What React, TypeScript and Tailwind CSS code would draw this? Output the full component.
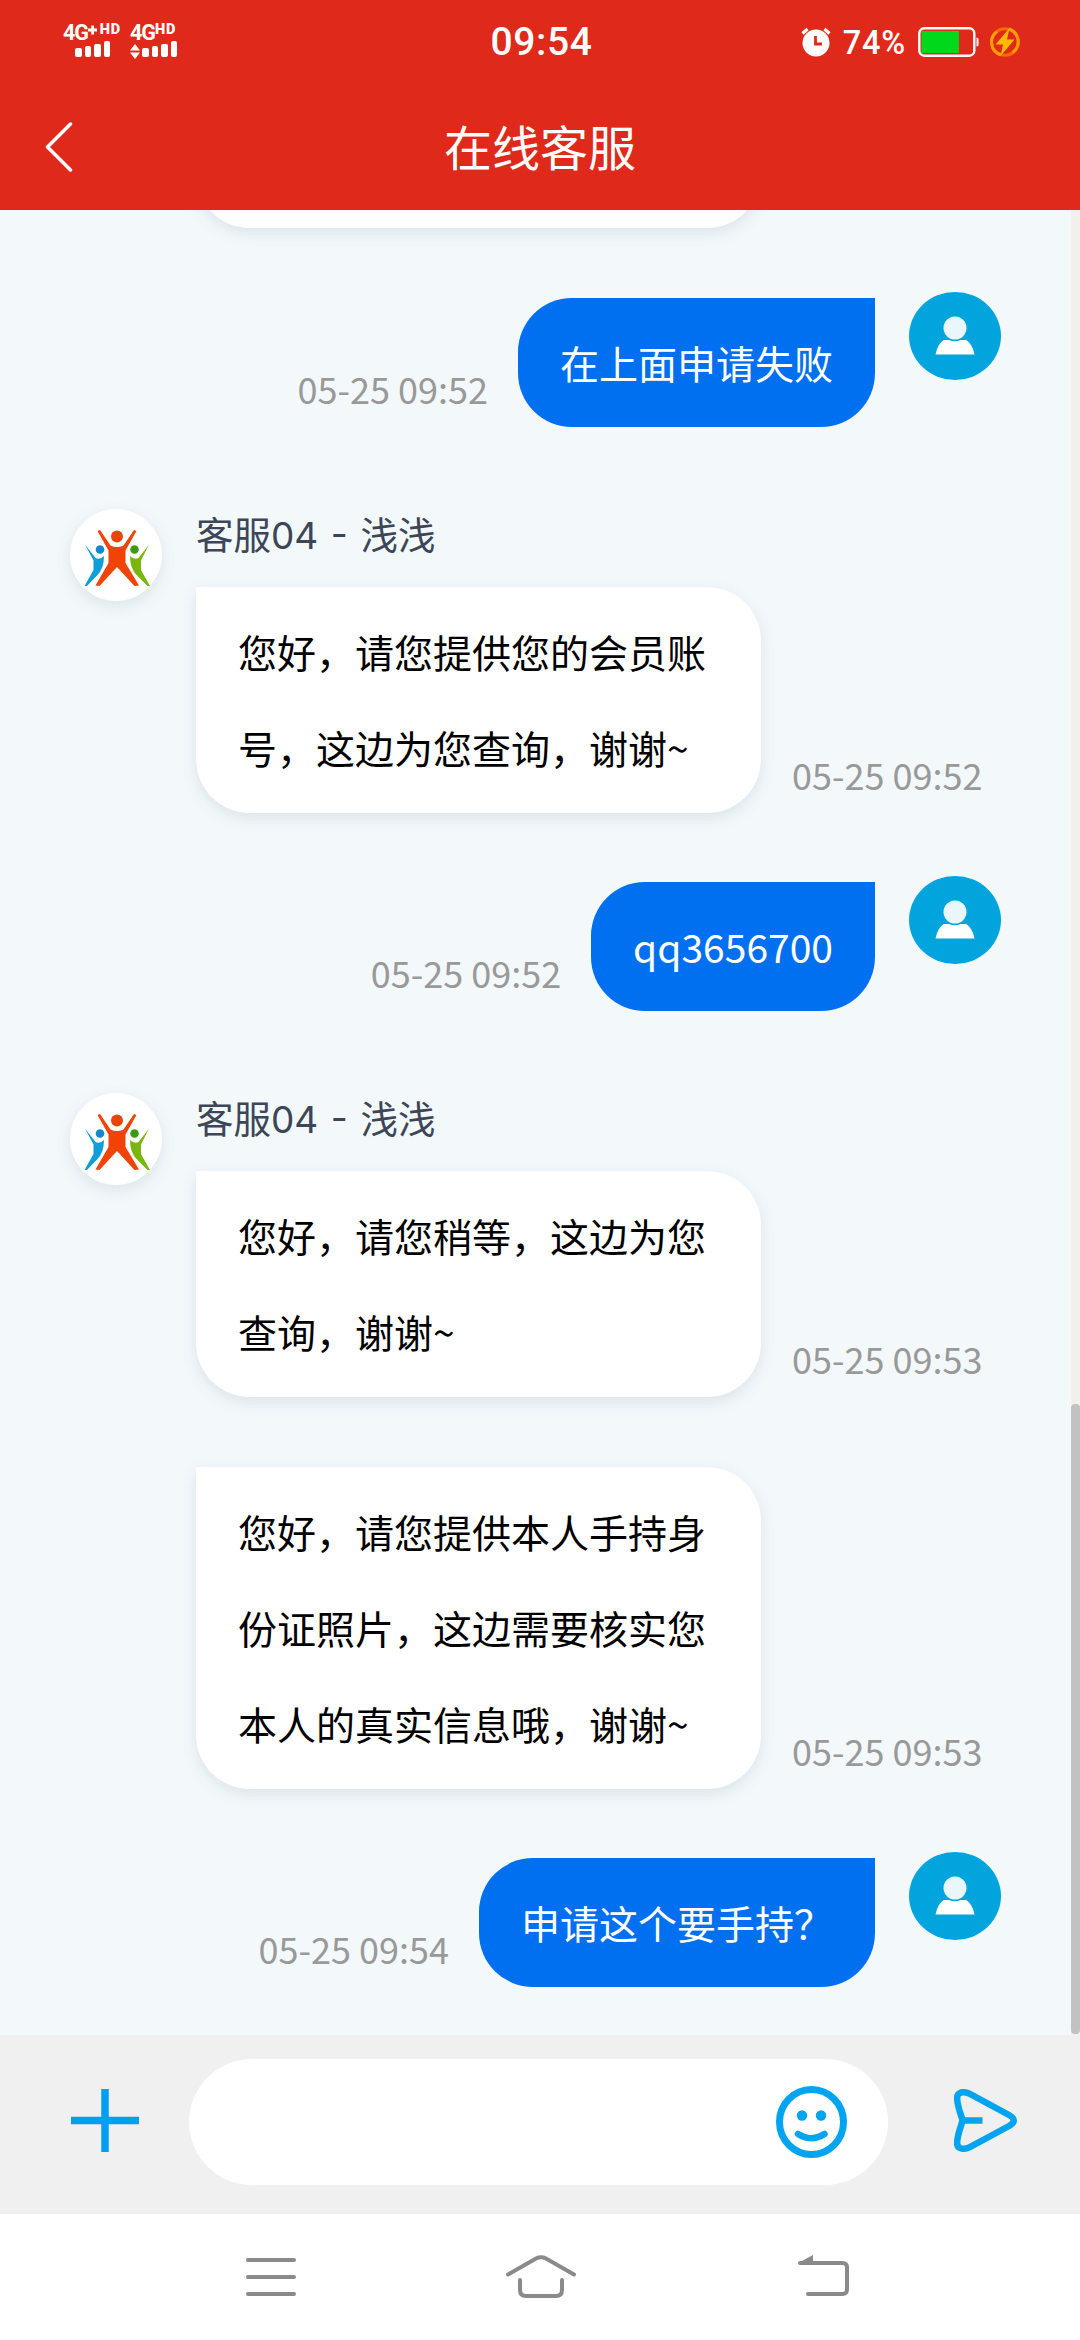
import type { ReactNode } from "react";

type AgentBubble = {
  lines: string[];
  time: string;
};

type Message =
  | { from: "user"; text: string; time: string }
  | { from: "agent"; name: [string, string, string]; bubbles: AgentBubble[] };

const messages: Message[] = [
  { from: "user", text: "在上面申请失败", time: "05-25 09:52" },
  {
    from: "agent",
    name: ["客服", "04 - ", "浅浅"],
    bubbles: [
      {
        lines: ["您好，请您提供您的会员账", "号，这边为您查询，谢谢~"],
        time: "05-25 09:52",
      },
    ],
  },
  { from: "user", text: "qq3656700", time: "05-25 09:52" },
  {
    from: "agent",
    name: ["客服", "04 - ", "浅浅"],
    bubbles: [
      {
        lines: ["您好，请您稍等，这边为您", "查询，谢谢~"],
        time: "05-25 09:53",
      },
      {
        lines: [
          "您好，请您提供本人手持身",
          "份证照片，这边需要核实您",
          "本人的真实信息哦，谢谢~",
        ],
        time: "05-25 09:53",
      },
    ],
  },
  { from: "user", text: "申请这个要手持？", time: "05-25 09:54" },
];

function SignalBars() {
  return (
    <div className="flex items-end gap-[3px]">
      <span className="h-[9px] w-[6.5px] rounded-[2px] bg-white" />
      <span className="h-[11px] w-[6.5px] rounded-[2px] bg-white" />
      <span className="h-[13px] w-[6.5px] rounded-[2px] bg-white" />
      <span className="h-4 w-[6.5px] rounded-[2px] bg-white" />
    </div>
  );
}

function StatusBar() {
  return (
    <div className="flex h-[84px] items-center justify-between pr-[60px] pl-[63px] font-['Roboto'] text-white">
      <div className="-mt-[3px] flex w-[240px] gap-[9px]">
        <div className="flex w-[58px] flex-col">
          <div className="flex h-[16px] items-start font-bold">
            <span className="w-[25px] text-[21.5px] leading-[16px] tracking-[-1.2px]">4G</span>
            <svg className="h-[10px] w-[10px]" viewBox="0 0 10 10" stroke="#fff" strokeWidth="3">
              <path d="M0 5H10M5 0V10" />
            </svg>
            <span className="ml-[3px] text-[14.5px] leading-[10px] font-black tracking-[0.8px]">HD</span>
          </div>
          <div className="ml-3">
            <SignalBars />
          </div>
        </div>
        <div className="flex flex-col">
          <div className="flex h-[16px] items-start font-bold">
            <span className="w-[25px] text-[21.5px] leading-[16px] tracking-[-1.2px]">4G</span>
            <span className="text-[14.5px] leading-[10px] font-black tracking-[0.8px]">HD</span>
          </div>
          <div className="flex items-end gap-[2px]">
            <svg className="-mb-[2px] h-[15px] w-[10px]" viewBox="0 0 10 15" fill="#fff">
              <path d="M5 0 10 6.500H0ZM0 8.500H10L5 15Z" />
            </svg>
            <SignalBars />
          </div>
        </div>
      </div>

      <span className="text-[39px] leading-none font-medium tracking-[0.6px]">09:54</span>

      <div className="flex w-[240px] items-center justify-end">
        <svg className="h-[30px] w-[30px] shrink-0" viewBox="0 0 30 30">
          <path d="M1.500 6.500 6.500 2M28.500 6.500 23.500 2" stroke="#fff" strokeWidth="3.200" />
          <circle cx="15" cy="16" r="13.500" fill="#fff" />
          <path d="M14.500 9V17H21" fill="none" stroke="#df291a" strokeWidth="2.800" />
        </svg>
        <span className="ml-3 pt-[2px] text-[32.500px] leading-none font-medium tracking-[0.8px]">74%</span>
        <svg className="ml-3 h-[30px] w-[61px] shrink-0" viewBox="0 0 61 30">
          <rect x="1.300" y="1.300" width="55" height="27.400" rx="5" fill="none" stroke="#fff" strokeWidth="2.400" />
          <rect x="3.500" y="4" width="37.500" height="22" fill="#00d91b" />
          <path d="M58.500 10.500Q60.500 10.500 60.500 12V18Q60.500 19.500 58.500 19.500Z" fill="#fff" />
        </svg>
        <svg className="ml-[11px] h-[30px] w-[30px] shrink-0" viewBox="0 0 30 30">
          <circle cx="15" cy="15" r="13.300" fill="none" stroke="#fb6a00" strokeWidth="3" />
          <path d="M11 28A13.300 13.300 0 0 1 7 4.500M19 2A13.300 13.300 0 0 1 22.500 25.500" fill="none" stroke="#ff9d00" strokeWidth="3" />
          <path d="M19.500 1 5.500 17.500H13L10.500 29 24.500 12.500H17Z" fill="#ffb900" />
        </svg>
      </div>
    </div>
  );
}

function UserAvatar() {
  return (
    <svg className="ml-[34px] h-[88px] w-[92px] shrink-0" viewBox="0 0 92 88">
      <ellipse cx="46" cy="44" rx="46" ry="44" fill="#02a4dd" />
      <path d="M35 48H57C61.500 50.500 64 56 65.500 62.500H26.500C28 56 30.500 50.500 35 48Z" fill="#fff" />
      <circle cx="46" cy="36" r="13.200" fill="#02a4dd" />
      <circle cx="46" cy="36" r="11.500" fill="#e9f7fd" />
    </svg>
  );
}

function AgentAvatar() {
  return (
    <div className="h-[92px] w-[92px] shrink-0 rounded-full bg-white shadow-[0_5px_16px_rgba(60,90,110,0.12)]">
      <svg viewBox="0 0 92 92">
        <path d="M15 35.500 25.500 49Q30 51 34 47Q34 60 27 66.500L17 77H14.500L23.500 61V51.500Z" fill="#0e9fd8" />
        <circle cx="30" cy="40.500" r="4.300" fill="#1488cf" />
        <path d="M79 35.500 68.500 49Q64 51 60 47Q60 60 67 66.500L77.500 77H80L71 61V51.500Z" fill="#7cb50e" />
        <circle cx="64.500" cy="40.500" r="4.300" fill="#3f9b14" />
        <path d="M27.500 22 30 21 40.500 36.500Q47 39.500 53.500 36.500L64 21 66.500 22 55.500 41.500V54L69 76.500 64.500 77 47 58 29.500 77 25.500 76.500 38.500 54V41.500Z" fill="#f04407" />
        <circle cx="47" cy="27.500" r="6" fill="#f04407" />
      </svg>
    </div>
  );
}

function Time({ children }: { children: ReactNode }) {
  return (
    <span className="mb-[21px] text-[36px] leading-9 whitespace-nowrap text-[#999]">
      {children}
    </span>
  );
}

function UserMessage({ text, time }: { text: string; time: string }) {
  return (
    <div className="flex justify-end pr-[70px]">
      <div className="mt-[6px] flex items-end gap-[30px]">
        <Time>{time}</Time>
        <p className="h-[129px] rounded-[54px] rounded-tr-none bg-[#0070f0] px-[42px] pt-[16px] text-[39px] leading-[96px] whitespace-nowrap text-white">
          {text}
        </p>
      </div>
      <UserAvatar />
    </div>
  );
}

function AgentMessage({
  name,
  bubbles,
}: {
  name: [string, string, string];
  bubbles: AgentBubble[];
}) {
  return (
    <div className="flex gap-[34px] pl-[70px]">
      <AgentAvatar />
      <div className="flex flex-col">
        <h2 className="mb-[29px] h-[49px] text-[37.500px] leading-[48px] whitespace-pre text-[#3c4657]">
          {name[0]}
          <span className="font-['Inter'] text-[37px] [word-spacing:2.2px]">{name[1]}</span>
          {name[2]}
        </h2>
        <div className="flex flex-col gap-[70px]">
          {bubbles.map((bubble, i) => (
            <div key={i} className="flex items-end gap-[31px]">
              <div className="w-[565px] rounded-[54px] rounded-tl-none bg-white pt-[16px] pb-[18px] pl-[42px] text-[39px] leading-[96px] text-black shadow-[0_5px_16px_rgba(60,90,110,0.12)]">
                {bubble.lines.map((line) => (
                  <p key={line} className="whitespace-nowrap">
                    {line}
                  </p>
                ))}
              </div>
              <Time>{bubble.time}</Time>
            </div>
          ))}
        </div>
      </div>
    </div>
  );
}

function InputBar() {
  return (
    <div className="flex h-[179px] items-center bg-[#f0f0f0] pl-[71px]">
      <svg className="-mt-[8px] h-[63px] w-[68px]" viewBox="0 0 68 63" stroke="#009ff0" strokeWidth="7.500">
        <path d="M0 31.500H68M34 0V63" />
      </svg>
      <div className="-mt-[5px] ml-[50px] flex h-[126px] w-[699px] items-center justify-end rounded-full bg-white pr-[41px]">
        <svg className="h-[72px] w-[71px]" viewBox="0 0 71 72">
          <ellipse cx="35.500" cy="36" rx="32" ry="32.500" fill="none" stroke="#02a4f0" strokeWidth="7" />
          <circle cx="26" cy="29.500" r="5.200" fill="#02a4f0" />
          <circle cx="45" cy="29.500" r="5.200" fill="#02a4f0" />
          <path d="M22 48Q35.500 56.500 48.500 48" fill="none" stroke="#02a4f0" strokeWidth="6.500" strokeLinecap="round" />
        </svg>
      </div>
      <svg className="-mt-[9px] ml-[66px] h-[63px] w-[63px]" viewBox="0 0 63 63" fill="none" stroke="#02a4f0" strokeWidth="6.500">
        <path d="M3.200 10C2.500 4 8 1.500 15 4.500L55 26Q64.500 31.500 55 37L15 58.500C8 61.500 2.500 59 3.200 53C3.500 45 7 38 8.500 31.500C7 25 3.500 18 3.200 10Z" />
        <path d="M8.500 31.500H28.500" />
      </svg>
    </div>
  );
}

function NavBar() {
  return (
    <nav className="flex h-[126px] items-start bg-white pt-[40px] pl-[245px]">
      <svg className="h-[46px] w-[52px]" viewBox="0 0 52 46" stroke="#8a8a8a" strokeWidth="4" strokeLinecap="round">
        <path d="M3 6H49M3 23H49M3 40H49" />
      </svg>
      <svg className="ml-[208px] h-[46px] w-[72px]" viewBox="0 0 72 46" fill="none" stroke="#8a8a8a" strokeWidth="4" strokeLinecap="round">
        <path d="M3 20.500 31 4.500Q36 2 41 4.500L69 20.500" />
        <path d="M15 26V36Q15 42 21 42H51Q57 42 57 36V26" />
      </svg>
      <svg className="ml-[220px] h-[46px] w-[54px]" viewBox="0 0 54 46" fill="none" stroke="#8a8a8a" strokeWidth="4" strokeLinecap="round">
        <path d="M3 9H45.500Q50 9 50 13.500V35.500Q50 40 45.500 40H11" />
        <path d="M2 8.500 16 1V9Z" fill="#8a8a8a" stroke="none" />
      </svg>
    </nav>
  );
}

export default function App() {
  return (
    <div className="flex h-[2340px] w-[1080px] flex-col overflow-hidden bg-white font-['Noto_Sans_CJK_SC',sans-serif]">
      <header className="h-[210px] bg-[#df291a] text-white">
        <StatusBar />
        <div className="flex h-[126px] items-center pl-[45px]">
          <svg className="h-[50px] w-[28px]" viewBox="0 0 28 50" fill="none" stroke="#fff" strokeWidth="3.500" strokeLinecap="round" strokeLinejoin="round">
            <path d="M25.500 2 2.500 25 25.500 48" />
          </svg>
          <h1 className="-mt-[5px] w-[934px] text-center text-[48px] leading-[72px]">在线客服</h1>
        </div>
      </header>

      <div className="flex h-[1825px] bg-[#f3f8fb]">
        <main className="flex w-[1071px] flex-col overflow-hidden">
          <div className="-mt-[111px] mb-[64px] ml-[196px] h-[129px] w-[565px] shrink-0 rounded-[54px] rounded-tl-none bg-white shadow-[0_5px_16px_rgba(60,90,110,0.12)]" />
          {messages.map((message, i) =>
            message.from === "user" ? (
              <div key={i} className="mb-[82px]">
                <UserMessage text={message.text} time={message.time} />
              </div>
            ) : (
              <div key={i} className="mb-[63px]">
                <AgentMessage name={message.name} bubbles={message.bubbles} />
              </div>
            ),
          )}
        </main>
        <div className="flex w-[9px] flex-col justify-end bg-[#f2f0eb] pb-[1px]">
          <div className="h-[630px] rounded-[4px] bg-[#c2c2c2]" />
        </div>
      </div>

      <InputBar />
      <NavBar />
    </div>
  );
}
